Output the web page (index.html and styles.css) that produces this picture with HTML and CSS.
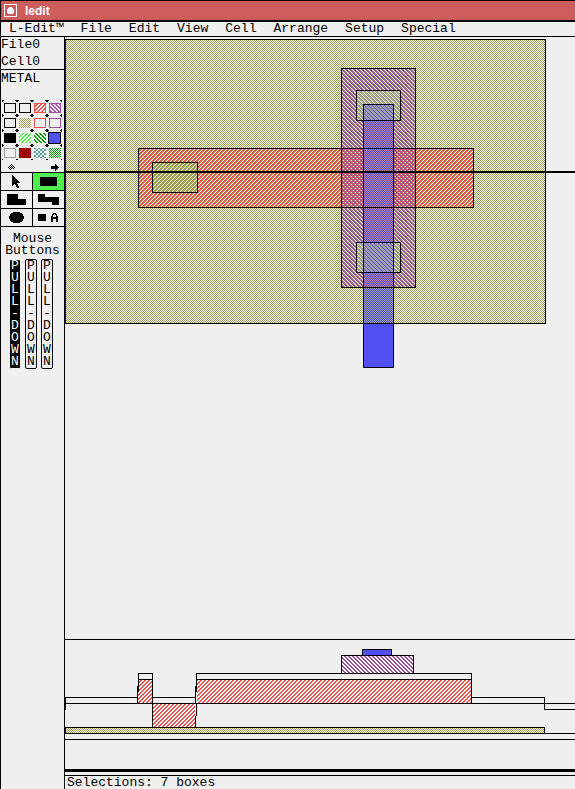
FILE: index.html
```html
<!DOCTYPE html>
<html lang="en">
<head>
<meta charset="utf-8">
<title>ledit</title>
<link rel="stylesheet" href="styles.css">
</head>
<body>
<svg class="defs" aria-hidden="true">
  <defs>
    <pattern id="checker" width="2" height="2" patternUnits="userSpaceOnUse"><path fill="#a0a050" d="M0 0h1v1h-1zM1 1h1v1h-1z"/></pattern>
    <pattern id="checker-gray" width="2" height="2" patternUnits="userSpaceOnUse"><path fill="#a0a0a0" d="M0 0h1v1h-1zM1 1h1v1h-1z"/></pattern>
    <pattern id="checker-rose" width="2" height="2" patternUnits="userSpaceOnUse"><path fill="#c08090" d="M0 0h1v1h-1zM1 1h1v1h-1z"/></pattern>
    <pattern id="checker-green" width="2" height="2" patternUnits="userSpaceOnUse"><path fill="#00a000" d="M0 0h1v1h-1zM1 1h1v1h-1z"/></pattern>
    <pattern id="checker-teal" width="4" height="4" patternUnits="userSpaceOnUse"><path fill="#50a0a0" d="M0 0h2v2h-2zM2 2h2v2h-2z"/></pattern>
    <pattern id="red" width="4" height="4" patternUnits="userSpaceOnUse"><path fill="#f05050" d="M0 0h2v1h-2zM3 1h1v1h-1zM0 1h1v1h-1zM2 2h2v1h-2zM1 3h2v1h-2z"/></pattern>
    <pattern id="olive" width="4" height="4" patternUnits="userSpaceOnUse"><path fill="#a0a050" d="M0 0h2v1h-2zM3 1h1v1h-1zM0 1h1v1h-1zM2 2h2v1h-2zM1 3h2v1h-2z"/></pattern>
    <pattern id="lime" width="4" height="4" patternUnits="userSpaceOnUse"><path fill="#50f050" d="M0 0h2v1h-2zM3 1h1v1h-1zM0 1h1v1h-1zM2 2h2v1h-2zM1 3h2v1h-2z"/></pattern>
    <pattern id="purple" width="4" height="4" patternUnits="userSpaceOnUse"><path fill="#a050a0" d="M0 0h2v1h-2zM1 1h2v1h-2zM2 2h2v1h-2zM3 3h1v1h-1zM0 3h1v1h-1z"/></pattern>
    <pattern id="gray" width="4" height="4" patternUnits="userSpaceOnUse"><path fill="#a0a0a0" d="M0 0h2v1h-2zM1 1h2v1h-2zM2 2h2v1h-2zM3 3h1v1h-1zM0 3h1v1h-1z"/></pattern>
    <pattern id="green" width="4" height="4" patternUnits="userSpaceOnUse"><path fill="#00a000" d="M0 0h2v1h-2zM1 1h2v1h-2zM2 2h2v1h-2zM3 3h1v1h-1zM0 3h1v1h-1z"/></pattern>
    <path id="ticks" d="M0 0h2v1h-2zM0 0h1v2h-1zM13 0h2v1h-2zM14 0h1v2h-1zM0 14h1v1h-1zM14 14h1v1h-1z"/>
  </defs>
</svg>
<div class="app">
  <header class="titlebar">
    <button class="close" aria-label="Close"><svg width="13" height="13"><path fill="#fff" fill-rule="evenodd" d="M0 0h13v13h-13zM1 1v11h11v-11z"/><circle cx="6.5" cy="6.5" r="3.5" fill="#fff"/></svg></button>
    <h1>ledit</h1>
  </header>
  <nav class="menu">
    <button>L-Edit™</button><button>File</button><button>Edit</button><button>View</button><button>Cell</button><button>Arrange</button><button>Setup</button><button>Special</button>
  </nav>
  <div class="work">
    <aside class="side">
      <div class="names"><p>File0</p><p>Cell0</p></div>
      <p class="layer">METAL</p>
      <div class="layers">
        <button aria-label="Layer 1"><svg><use href="#ticks"/><path class="frame" fill="#000" d="M2 3h12v10h-12zM3 4v8h10v-8z"/></svg></button>
        <button aria-label="Layer 2"><svg><use href="#ticks"/><path class="frame" fill="#000" d="M2 3h12v10h-12zM3 4v8h10v-8z"/></svg></button>
        <button aria-label="Layer 3"><svg><use href="#ticks"/><rect class="patch" fill="#fff"/><rect class="patch" fill="url(#red)"/><path class="frame" fill="#f05050" d="M2 3h12v10h-12zM3 4v8h10v-8z"/></svg></button>
        <button aria-label="Layer 4"><svg><use href="#ticks"/><rect class="patch" fill="#fff"/><rect class="patch" fill="url(#purple)"/><path class="frame" fill="#a050a0" d="M2 3h12v10h-12zM3 4v8h10v-8z"/></svg></button>
        <button aria-label="Layer 5"><svg><use href="#ticks"/><path class="frame" fill="#000" d="M2 3h12v10h-12zM3 4v8h10v-8z"/></svg></button>
        <button aria-label="Layer 6"><svg><use href="#ticks"/><rect class="patch" fill="#fff"/><rect class="patch" fill="url(#checker)"/></svg></button>
        <button aria-label="Layer 7"><svg><use href="#ticks"/><path class="frame" fill="#f05050" d="M2 3h12v10h-12zM3 4v8h10v-8z"/></svg></button>
        <button aria-label="Layer 8"><svg><use href="#ticks"/><path class="frame" fill="#a050a0" d="M2 3h12v10h-12zM3 4v8h10v-8z"/></svg></button>
        <button aria-label="Layer 9"><svg><use href="#ticks"/><rect class="patch" fill="#000"/></svg></button>
        <button aria-label="Layer 10"><svg><use href="#ticks"/><rect class="patch" fill="#fff"/><rect class="patch" fill="url(#lime)"/></svg></button>
        <button aria-label="Layer 11"><svg><use href="#ticks"/><rect class="patch" fill="#fff"/><rect class="patch" fill="url(#green)"/></svg></button>
        <button aria-label="Metal"><svg><use href="#ticks"/><rect x="1" y="2" width="13" height="12"/><rect x="2" y="3" width="11" height="10" fill="#5050f0"/></svg></button>
        <button aria-label="Layer 13"><svg><use href="#ticks"/><path class="frame" fill="#a0a0a0" d="M2 3h12v10h-12zM3 4v8h10v-8z"/></svg></button>
        <button aria-label="Layer 14"><svg><use href="#ticks"/><rect class="patch" fill="#a00000"/></svg></button>
        <button aria-label="Layer 15"><svg><use href="#ticks"/><rect class="patch" fill="#fff"/><rect class="patch" fill="url(#checker-teal)"/></svg></button>
        <button aria-label="Layer 16"><svg><use href="#ticks"/><rect class="patch" fill="#fff"/><rect class="patch" fill="url(#checker-green)"/></svg></button>
      </div>
      <div class="scroll">
        <button aria-label="Previous layers"><svg width="8" height="7"><path d="M3 0h1v1h-1zM2 1h1v1h-1zM4 1h1v1h-1zM1 2h1v1h-1zM3 2h1v1h-1zM5 2h1v1h-1zM0 3h1v1h-1zM2 3h1v1h-1zM4 3h1v1h-1zM6 3h1v1h-1zM1 4h1v1h-1zM3 4h1v1h-1zM5 4h1v1h-1zM2 5h1v1h-1z"/></svg></button>
        <button aria-label="Next layers"><svg width="8" height="7"><path d="M0 2h4v-2h1v1h1v1h1v1h1v1h-1v1h-1v1h-1v1h-1v-2h-4z"/></svg></button>
      </div>
      <div class="tools">
        <button aria-label="Select"><svg width="31" height="17"><path d="M11 2v11h1v-1h1v-1h1v1h1v2h1v1h2v-2h-1v-2h-1v-1h3v-1h-1v-1h-1v-1h-1v-1h-1v-1h-1v-1h-1v-1h-1v-1z"/></svg></button>
        <button class="active" aria-label="Box"><svg width="31" height="17"><rect x="7" y="4" width="17" height="9"/></svg></button>
        <button aria-label="Polygon"><svg width="31" height="17"><path d="M6 3h11v5h8v6h-19z"/></svg></button>
        <button aria-label="Wire"><svg width="31" height="17"><path d="M5 3h7v3h14v8h-7v-3h-14z"/></svg></button>
        <button aria-label="Circle"><svg width="31" height="17"><ellipse cx="15.5" cy="8.5" rx="7.5" ry="5.5"/></svg></button>
        <button aria-label="Port"><svg width="31" height="17"><path fill-rule="evenodd" d="M5 5h8v7h-8zM18 13v-6h1v-2h1v-1h3v1h1v2h1v6h-2v-3h-3v3zM20 8h3v-2h-1v-1h-1v1h-1z"/></svg></button>
      </div>
      <h2>Mouse<br>Buttons</h2>
      <div class="mouse"><span class="bar pressed">PULL-DOWN</span><span class="bar">PULL-DOWN</span><span class="bar">PULL-DOWN</span></div>
    </aside>
    <main class="views">
      <svg class="layout" role="img" aria-label="Cell layout">
        <g transform="translate(-65 -37)">
          <rect x="65" y="39" width="481" height="285" fill="#fff"/>
          <rect x="65" y="39" width="481" height="285" fill="url(#checker)"/>
          <rect x="138" y="148" width="336" height="60" fill="url(#red)"/>
          <rect x="341" y="68" width="75" height="220" fill="url(#purple)"/>
          <rect x="152" y="162" width="46" height="31" fill="#fff"/>
          <rect x="152" y="162" width="46" height="31" fill="url(#checker)"/>
          <rect x="152" y="162" width="46" height="31" fill="url(#olive)"/>
          <rect x="363" y="104" width="31" height="264" fill="#5050f0"/>
          <rect x="363" y="104" width="31" height="184" fill="url(#checker-rose)"/>
          <rect x="363" y="288" width="31" height="36" fill="url(#checker-gray)"/>
          <path fill="url(#checker-gray)" d="M363 104h31v17h-31zM363 242h31v31h-31z"/>
          <rect x="356" y="90" width="45" height="31" fill="url(#gray)"/>
          <rect x="356" y="242" width="45" height="31" fill="url(#gray)"/>
        </g>
        <g class="outline" transform="translate(-64.5 -36.5)">
          <rect x="65" y="39" width="480" height="284"/>
          <rect x="138" y="148" width="335" height="59"/>
          <rect x="341" y="68" width="74" height="219"/>
          <rect x="152" y="162" width="45" height="30"/>
          <rect x="356" y="90" width="44" height="30"/>
          <rect x="356" y="242" width="44" height="30"/>
          <rect x="363" y="104" width="30" height="263"/>
        </g>
        <rect x="0" y="134" width="100%" height="2"/>
      </svg>
      <svg class="section" role="img" aria-label="Cross section">
        <g transform="translate(-65 -639)">
          <path fill="#fff" d="M138 680h14v23h-14zM153 704h42v23h-42zM197 680h274v23h-274zM341 655h72v18h-72zM65 728h479v5h-479z"/>
          <path fill="url(#red)" d="M138 680h14v23h-14zM153 704h42v23h-42zM197 680h274v23h-274z"/>
          <rect x="341" y="655" width="72" height="18" fill="url(#purple)"/>
          <rect x="65" y="728" width="479" height="5" fill="url(#checker)"/>
          <rect x="362" y="649" width="29" height="6" fill="#5050f0"/>
        </g>
        <g class="outline" transform="translate(-64.5 -638.5)">
          <path d="M65 709V697H137M137 703V685M138 691V673H152V727H195M138 679H152M152 697H195M195 703V685M196 691V673H471V703M196 679H471M196 703V715M195 715V727M471 697H544V709H2000"/>
          <rect x="341" y="655" width="72" height="18"/>
          <rect x="362" y="649" width="29" height="6"/>
          <path d="M65 733V727H544V733M152 727H195"/>
        </g>
        <rect y="0" width="100%" height="1"/>
        <rect y="64" width="100%" height="1"/>
        <rect y="94" width="100%" height="1"/>
        <rect y="100" width="100%" height="1"/>
        <rect y="130" width="100%" height="3"/>
      </svg>
      <footer class="status">Selections: 7 boxes</footer>
    </main>
  </div>
</div>
</body>
</html>
```
FILE: styles.css
```css
* {
  box-sizing: border-box;
  margin: 0;
  padding: 0;
}

body {
  background: #f0f0f0;
  color: #000;
  font: 13px/16px "Liberation Mono", monospace;
}

button {
  display: block;
  border: 0;
  background: none;
  color: inherit;
  font: inherit;
}

svg {
  display: block;
  shape-rendering: crispEdges;
}

.defs {
  position: absolute;
  width: 0;
  height: 0;
}

.app {
  display: flex;
  flex-direction: column;
  min-height: 100vh;
  border-left: 1px solid #000;
}

.titlebar {
  display: flex;
  align-items: center;
  gap: 8px;
  height: 22px;
  padding-left: 3px;
  border-top: 1px solid #000;
  border-bottom: 2px solid #000;
  background: #cd5c5c;
  color: #fff;
}

.titlebar h1 {
  font: bold 12px/18px "Liberation Sans", sans-serif;
}

.menu {
  display: flex;
  gap: 17px;
  height: 15px;
  padding-left: 8px;
  border-bottom: 1px solid #000;
  line-height: 14px;
}

.work {
  display: flex;
  flex: 1;
}

.side {
  flex: none;
  width: 64px;
  border-right: 1px solid #000;
}

.names {
  display: grid;
  gap: 2px;
  border-bottom: 1px solid #000;
  line-height: 15px;
}

.layer {
  padding: 1px 0 13px;
}

.layers {
  display: grid;
  grid-template-columns: repeat(4, 15px);
  padding-left: 1px;
}

.layers svg {
  width: 15px;
  height: 15px;
}

.patch {
  x: 2px;
  y: 3px;
  width: 12px;
  height: 10px;
}

.frame {
  fill-rule: evenodd;
}

.scroll {
  display: flex;
  align-items: center;
  justify-content: space-between;
  height: 12px;
  padding: 2px 5px 0 7px;
}

.tools {
  display: grid;
  grid-template-columns: 31px 31px;
  gap: 1px;
  border: solid #000;
  border-width: 1px 0;
  background: #000;
}

.tools button {
  background: #f0f0f0;
}

.tools .active {
  background: #50f050;
}

.side h2 {
  padding: 6px 0 2px;
  font: 13px/12px "Liberation Mono", monospace;
  text-align: center;
}

.mouse {
  display: flex;
  gap: 4px;
  padding-left: 8px;
}

.bar {
  width: 12px;
  padding: 0 1px;
  border: 1px solid #000;
  border-radius: 2px;
  line-height: 12px;
  word-break: break-all;
}

.pressed {
  border-color: #f0f0f0;
  background: #000;
  color: #fff;
}

.views {
  display: flex;
  flex: 1;
  flex-direction: column;
  min-width: 0;
}

.layout {
  flex: 1;
  width: 100%;
  min-height: 340px;
}

.section {
  width: 100%;
  height: 136px;
}

.outline {
  fill: none;
  stroke: #000;
}

.status {
  padding-left: 2px;
  border-top: 1px solid #000;
  line-height: 13px;
}
```
